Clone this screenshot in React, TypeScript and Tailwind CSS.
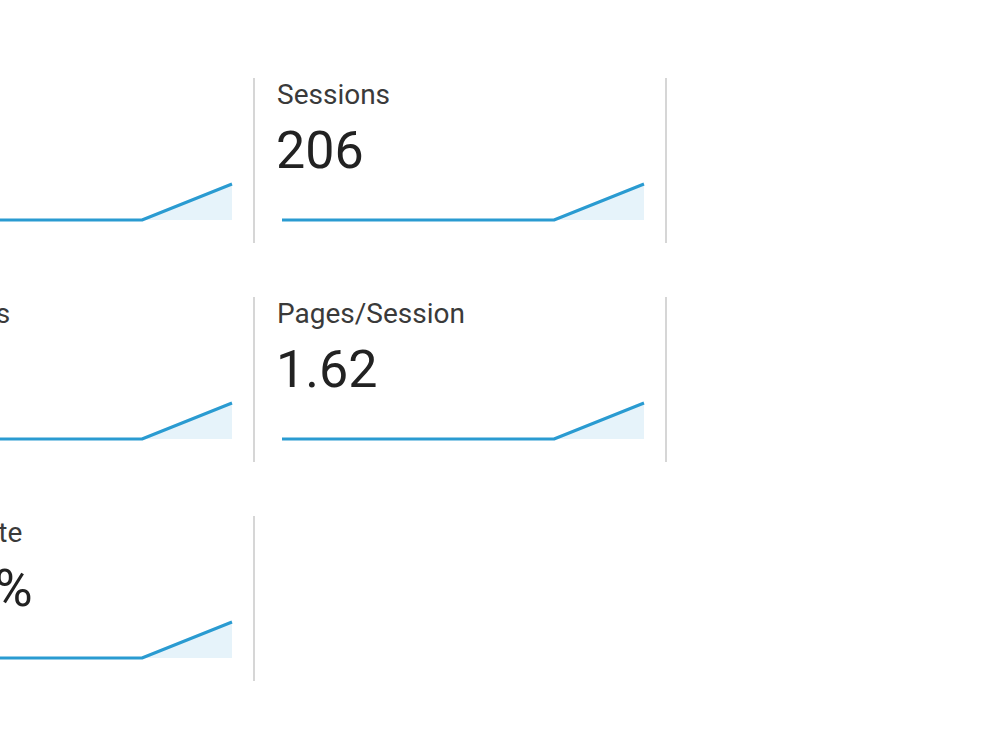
const METRICS = [
  { label: "Users", value: "127" },
  { label: "Sessions", value: "206" },
  { label: "Page Views", value: "334" },
  { label: "Pages/Session", value: "1.62" },
  { label: "Bounce Rate", value: "64.56%" },
];

function Sparkline() {
  // flat until the last day, then a jump — 364 x 40 box
  return (
    <svg width="364" height="40" viewBox="0 0 364 40" className="block">
      <polygon points="272,38 362,2 362,38" fill="#e6f3fa" />
      <polyline
        points="0,38 272,38 362,2"
        fill="none"
        stroke="#2a9bd1"
        strokeWidth="3"
        strokeLinejoin="round"
      />
    </svg>
  );
}

function MetricCard({ label, value }: { label: string; value: string }) {
  return (
    <div className="w-[412px] h-[165px] border-r-2 border-[#d6d6d6] flex flex-col">
      <div className="pl-[22px] pt-[1px] text-[28px] leading-[32px] text-[#3a3a3a]">{label}</div>
      <div className="pl-[21px] mt-[12px] text-[52px] leading-[56px] text-[#222]">{value}</div>
      <div className="pl-[27px] mt-auto mb-[21px]">
        <Sparkline />
      </div>
    </div>
  );
}

export default function App() {
  return (
    <main
      className="min-h-[749px] w-[1000px] overflow-hidden bg-white"
      style={{ fontFamily: "Roboto, 'Liberation Sans', sans-serif" }}
    >
      <div className="ml-[-157px] pt-[78px] grid grid-cols-[412px_412px] gap-y-[54px]">
        {METRICS.map((m) => (
          <MetricCard key={m.label} label={m.label} value={m.value} />
        ))}
      </div>
    </main>
  );
}
